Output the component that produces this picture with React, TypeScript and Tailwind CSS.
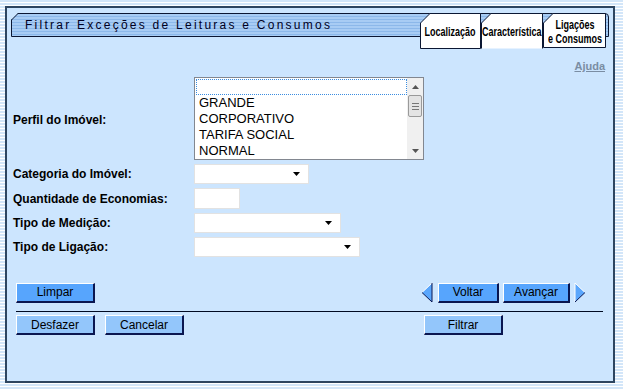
import React from "react";

const font = "font-['Liberation_Sans',Arial,sans-serif]";

function Tab({
  width,
  height,
  fill,
  bottom = true,
  children,
}: {
  width: number;
  height: number;
  fill: string;
  bottom?: boolean;
  children: React.ReactNode;
}) {
  const w = width - 0.5;
  const h = height - 0.5;
  return (
    <div className="relative flex items-center justify-center" style={{ width, height }}>
      <svg className="absolute inset-0" width={width} height={height}>
        <path d={`M0.5,10 L10,0.5 L${w},0.5 L${w},${h} L0.5,${h} Z`} fill={fill} stroke="none" />
        <path
          d={
            bottom
              ? `M0.5,${h} L0.5,10 L10,0.5 L${w},0.5 L${w},${h} Z`
              : `M0.5,${h} L0.5,10 L10,0.5 L${w},0.5 L${w},${h}`
          }
          fill="none"
          stroke="#0b1733"
          strokeWidth={1}
        />
      </svg>
      <div className="relative scale-x-[0.75] pt-[2px] text-center text-[12px] leading-[14px] font-bold whitespace-nowrap text-black">
        {children}
      </div>
    </div>
  );
}

function Select({ width }: { width: number }) {
  return (
    <div
      className="flex h-[20px] items-center justify-end border border-[#e2e2e2] bg-white pr-[8px]"
      style={{ width }}
    >
      <svg width="7" height="4">
        <path d="M0,0 L7,0 L3.5,4 Z" fill="#000" />
      </svg>
    </div>
  );
}

function Btn({
  children,
  light,
  width = 79,
}: {
  children: React.ReactNode;
  light?: boolean;
  width?: number;
}) {
  return (
    <div
      className={`flex h-[20px] items-center justify-center border-t border-l border-t-white border-l-white border-r-2 border-b-2 border-r-[#0a1650] border-b-[#0a1650] text-[12px] text-black ${
        light ? "bg-[#93c6fb]" : "bg-[#57a5fd]"
      }`}
      style={{ width }}
    >
      {children}
    </div>
  );
}

function Arrow({ dir }: { dir: "left" | "right" }) {
  return (
    <svg width="12" height="21" viewBox="0 0 12 21">
      {dir === "left" ? (
        <>
          <path d="M11,1 L1,10.5 L11,20 Z" fill="#5aa6fc" />
          <path d="M11,1 L1,10.5" stroke="#ffffff" strokeWidth="1" />
          <path d="M1,10.5 L11,20" stroke="#0a1650" strokeWidth="1" />
          <path d="M11,1 L11,20" stroke="#0a1650" strokeWidth="1" />
        </>
      ) : (
        <>
          <path d="M1,1 L11,10.5 L1,20 Z" fill="#5aa6fc" />
          <path d="M1,1 L1,20" stroke="#ffffff" strokeWidth="1" />
          <path d="M1,1 L11,10.5" stroke="#ffffff" strokeWidth="1" />
          <path d="M11,10.5 L1,20" stroke="#0a1650" strokeWidth="1" />
        </>
      )}
    </svg>
  );
}

export default function App() {
  const rows = ["GRANDE", "CORPORATIVO", "TARIFA SOCIAL", "NORMAL"];
  return (
    <div
      className={`${font} h-[389px] w-[623px] overflow-hidden bg-[repeating-linear-gradient(180deg,#d3e6f9_0px,#d3e6f9_2px,#ffffff_2px,#ffffff_3px)] pt-[6px] pl-[5px]`}
    >
      <div className="flex h-[377px] w-[610px] flex-col border-2 border-[#2d4560] bg-[#cce5fe]">
        {/* header */}
        <div className="relative mt-[5px] ml-[4px] mr-[4px] h-[36px]">
          <div className="relative flex h-[24px] items-center rounded-tr-[4px] border border-[#0b1733] bg-[repeating-linear-gradient(180deg,#a8ccf4_0px,#a8ccf4_2px,#8cb8ea_2px,#8cb8ea_3px)] pl-[13px]">
            <svg className="absolute -top-px -left-px" width="8" height="8">
              <path d="M0,0 L7,0 L0,7 Z" fill="#cce5fe" />
              <path d="M0.5,7 L7,0.5" stroke="#0b1733" strokeWidth="1" />
            </svg>
            <span className="text-[12px] tracking-[2.25px] text-[#000022]">
              Filtrar Exceções de Leituras e Consumos
            </span>
          </div>
          <div className="absolute top-0 left-[409px] flex">
            <Tab width={61} height={36} fill="#ffffff">
              Localização
            </Tab>
            <Tab width={62} height={36} fill="#ffffff" bottom={false}>
              Característica
            </Tab>
            <Tab width={63} height={35} fill="#ffffff">
              Ligações
              <br />e Consumos
            </Tab>
          </div>
        </div>

        <div className="mt-[10px] flex justify-end pr-[8px]">
          <span className="text-[11px] leading-[14px] font-bold text-[#7a8da3] underline">Ajuda</span>
        </div>

        {/* form */}
        <div className="mt-[4px] flex flex-col gap-[4px] pl-[6px] text-[12px] font-bold text-black">
          <div className="flex items-center">
            <div className="w-[181px] pt-[2px]">Perfil do Imóvel:</div>
            <div className="flex h-[83px] w-[230px] border border-[#828790] bg-white">
              <div className="flex flex-1 flex-col pt-[1px] pl-[1px] text-[13px] leading-[16px] font-normal">
                <div className="h-[16px] border border-dotted border-[#3b8de0]" />
                {rows.map((r) => (
                  <div key={r} className="h-[16px] pl-[3px]">
                    {r}
                  </div>
                ))}
              </div>
              <div className="flex w-[16px] flex-col items-center bg-[#f0f0f0]">
                <div className="flex h-[17px] items-center justify-center">
                  <svg width="7" height="4">
                    <path d="M0,4 L7,4 L3.5,0 Z" fill="#555" />
                  </svg>
                </div>
                <div className="flex h-[22px] w-[14px] flex-col items-center justify-center gap-[2px] rounded-[2px] border border-[#9a9a9a] bg-[#e4e4e4]">
                  <div className="h-px w-[7px] bg-[#777]" />
                  <div className="h-px w-[7px] bg-[#777]" />
                  <div className="h-px w-[7px] bg-[#777]" />
                </div>
                <div className="flex-1" />
                <div className="flex h-[17px] items-center justify-center">
                  <svg width="7" height="4">
                    <path d="M0,0 L7,0 L3.5,4 Z" fill="#555" />
                  </svg>
                </div>
              </div>
            </div>
          </div>
          <div className="flex h-[20px] items-center">
            <div className="w-[181px]">Categoria do Imóvel:</div>
            <Select width={115} />
          </div>
          <div className="flex h-[21px] items-center">
            <div className="w-[181px]">Quantidade de Economias:</div>
            <div className="h-[21px] w-[46px] border border-[#e2e2e2] bg-white" />
          </div>
          <div className="flex h-[20px] items-center">
            <div className="w-[181px]">Tipo de Medição:</div>
            <Select width={147} />
          </div>
          <div className="flex h-[20px] items-center">
            <div className="w-[181px]">Tipo de Ligação:</div>
            <Select width={166} />
          </div>
        </div>

        {/* buttons */}
        <div className="mt-[25px] ml-[9px] w-[587px]">
          <div className="flex items-center justify-between pr-[17px]">
            <Btn>Limpar</Btn>
            <div className="flex items-center gap-[4px]">
              <Arrow dir="left" />
              <div className="ml-[1px] flex gap-[4px]">
                <Btn width={61}>Voltar</Btn>
                <Btn width={67}>Avançar</Btn>
              </div>
              <Arrow dir="right" />
            </div>
          </div>
          <div className="mt-[8px] h-px bg-[#000a22]" />
          <div className="mt-[3px] flex items-center">
            <Btn light>Desfazer</Btn>
            <div className="ml-[10px]">
              <Btn light>Cancelar</Btn>
            </div>
            <div className="ml-auto mr-[100px]">
              <Btn light>Filtrar</Btn>
            </div>
          </div>
        </div>
      </div>
    </div>
  );
}
